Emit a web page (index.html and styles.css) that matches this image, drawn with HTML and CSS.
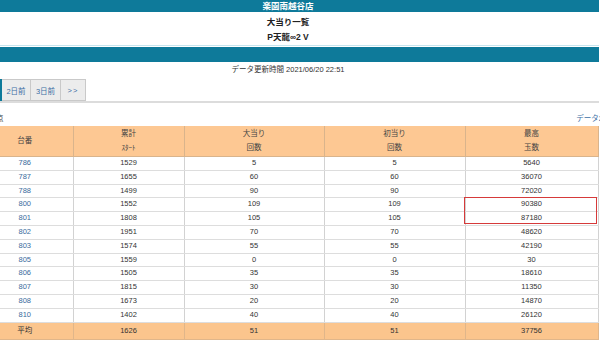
FILE: index.html
```html
<!DOCTYPE html>
<html lang="ja">
<head>
<meta charset="utf-8">
<title>大当り一覧</title>
<link rel="stylesheet" href="styles.css">
</head>
<body>
<div class="page">
  <header class="topbar">楽園南越谷店</header>
  <div class="title">
    <div>大当り一覧</div>
    <div>P天龍∞2 V</div>
  </div>
  <div class="bar"></div>
  <div class="updated">データ更新時間 2021/06/20 22:51</div>
  <nav class="tabs">
    <a class="tab active">前日</a>
    <a class="tab">2日前</a>
    <a class="tab">3日前</a>
    <a class="tab">&gt;&gt;</a>
  </nav>
  <div class="meta">
    <span class="note">全台点</span>
    <a class="more">データ2日分</a>
  </div>
  <div class="tablewrap">
    <table class="data">
      <colgroup>
        <col class="c1"><col class="c2"><col class="c3"><col class="c4"><col class="c5">
      </colgroup>
      <thead>
        <tr>
          <th>台番</th>
          <th>累計<br><span class="kana">ｽﾀｰﾄ</span></th>
          <th>大当り<br>回数</th>
          <th>初当り<br>回数</th>
          <th>最高<br>玉数</th>
        </tr>
      </thead>
      <tbody>
        <tr><td><a>786</a></td><td>1529</td><td>5</td><td>5</td><td>5640</td></tr>
        <tr><td><a>787</a></td><td>1655</td><td>60</td><td>60</td><td>36070</td></tr>
        <tr><td><a>788</a></td><td>1499</td><td>90</td><td>90</td><td>72020</td></tr>
        <tr><td><a>800</a></td><td>1552</td><td>109</td><td>109</td><td>90380</td></tr>
        <tr><td><a>801</a></td><td>1808</td><td>105</td><td>105</td><td>87180</td></tr>
        <tr><td><a>802</a></td><td>1951</td><td>70</td><td>70</td><td>48620</td></tr>
        <tr><td><a>803</a></td><td>1574</td><td>55</td><td>55</td><td>42190</td></tr>
        <tr><td><a>805</a></td><td>1559</td><td>0</td><td>0</td><td>30</td></tr>
        <tr><td><a>806</a></td><td>1505</td><td>35</td><td>35</td><td>18610</td></tr>
        <tr><td><a>807</a></td><td>1815</td><td>30</td><td>30</td><td>11350</td></tr>
        <tr><td><a>808</a></td><td>1673</td><td>20</td><td>20</td><td>14870</td></tr>
        <tr><td><a>810</a></td><td>1402</td><td>40</td><td>40</td><td>26120</td></tr>
        <tr class="avg"><td>平均</td><td>1626</td><td>51</td><td>51</td><td>37756</td></tr>
      </tbody>
    </table>
    <div class="highlight"></div>
  </div>
</div>
</body>
</html>
```

FILE: styles.css
```css
html, body {
  margin: 0;
  padding: 0;
  overflow: hidden;
  background: #fff;
}
body {
  font-family: "Liberation Sans", "Noto Sans CJK JP", sans-serif;
  font-size: 7.5px;
  color: #333;
}
.page {
  margin-left: -23px;
  width: 622px;
}
.topbar {
  height: 12px;
  line-height: 12px;
  background: #0e7a9a;
  color: #fff;
  font-weight: bold;
  font-size: 8.5px;
  text-align: center;
}
.title {
  height: 34px;
  box-sizing: border-box;
  padding-top: 3px;
  text-align: center;
  font-weight: bold;
  font-size: 8.5px;
  line-height: 15px;
  color: #222;
  border-bottom: 1px solid #c6e5ee;
}
.bar {
  margin-top: 1px;
  height: 15px;
  background: #0e7a9a;
}
.updated {
  height: 16px;
  line-height: 16px;
  text-align: center;
  color: #333;
}
.tabs {
  display: flex;
  margin-top: 1px;
  border-bottom: 2px solid #dcdcdc;
  height: 22px;
}
.tab {
  display: flex;
  align-items: center;
  justify-content: center;
  box-sizing: border-box;
  height: 22px;
  background: #ececec;
  border: 1px solid #c9c9c9;
  border-left: none;
  color: #3d6fa5;
  font-size: 7.5px;
}
.tab.active {
  width: 25px;
  background: #0e7a9a;
  border-color: #0e7a9a;
  color: #fff;
}
.tab:nth-child(2) { width: 29px; }
.tab:nth-child(3) { width: 30px; }
.tab:nth-child(4) { width: 25px; letter-spacing: 1px; }
.meta {
  display: flex;
  justify-content: space-between;
  margin-top: 9px;
  height: 14px;
  line-height: 14px;
  margin-right: -19px;
}
.note { color: #333; padding-left: 4px; }
.more { color: #3d6fa5; }
.tablewrap {
  position: relative;
  width: 621px;
}
.data {
  width: 621px;
  table-layout: fixed;
  border-collapse: collapse;
}
.c1 { width: 96px; }
.c2 { width: 111px; }
.c3 { width: 140px; }
.c4 { width: 141px; }
.c5 { width: 133px; }
.data th {
  background: #fdc893;
  font-weight: normal;
  color: #444;
  line-height: 14px;
  padding: 1px 0;
  height: 28px;
  border: 1px solid #d9b48c;
  border-top: none;
}
.data th:first-child { border-left: none; }
.kana { font-size: 7px; }
.data td {
  text-align: center;
  padding: 0;
  height: 12.8px;
  line-height: 12.8px;
  border-bottom: 1px solid #dddddd;
  border-right: 1px solid #d2d2d2;
  color: #333;
}
.data td a { color: #3a6c9c; }
.data tr.avg td {
  background: #fbc58d;
  height: 16px;
  line-height: 16px;
  border-color: #e0b68a;
  color: #333;
}
.highlight {
  position: absolute;
  left: 487px;
  top: 71px;
  width: 133px;
  height: 27px;
  box-sizing: border-box;
  border: 1.5px solid #d63a3a;
}
```
